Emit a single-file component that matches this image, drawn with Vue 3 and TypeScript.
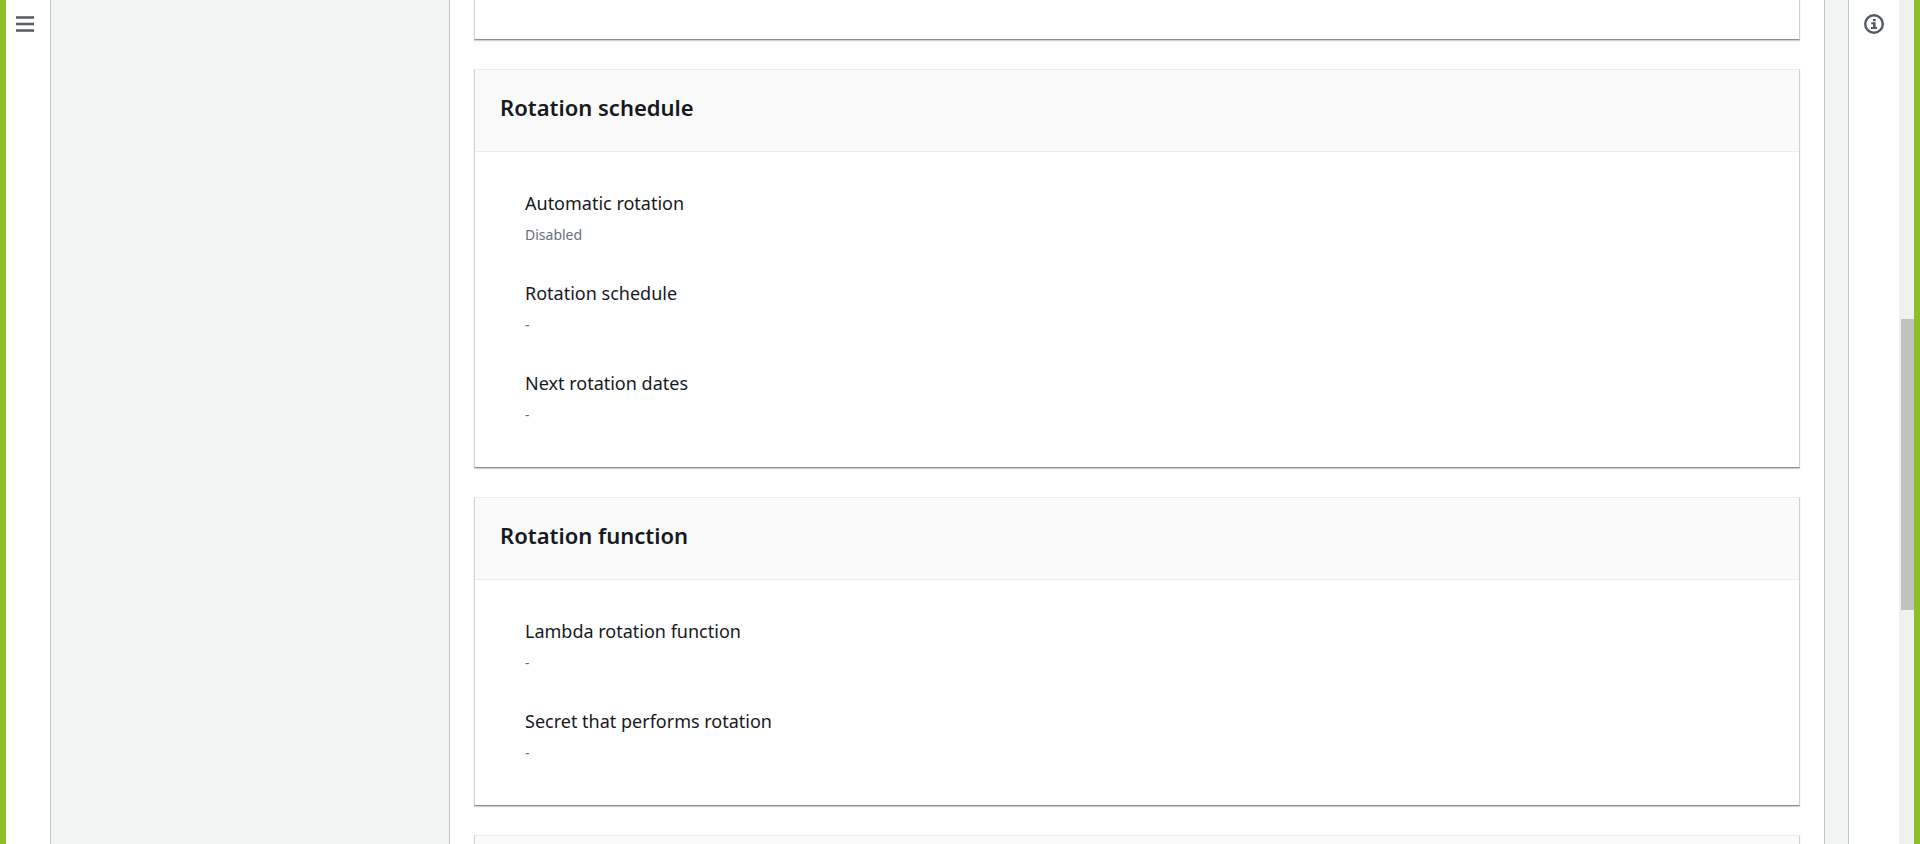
<script setup lang="ts">
interface Field {
  label: string
  value: string
}

interface Panel {
  id: string
  title: string
  fields: Field[]
}

const panels: Panel[] = [
  {
    id: 'schedule',
    title: 'Rotation schedule',
    fields: [
      { label: 'Automatic rotation', value: 'Disabled' },
      { label: 'Rotation schedule', value: '-' },
      { label: 'Next rotation dates', value: '-' },
    ],
  },
  {
    id: 'function',
    title: 'Rotation function',
    fields: [
      { label: 'Lambda rotation function', value: '-' },
      { label: 'Secret that performs rotation', value: '-' },
    ],
  },
]
</script>

<template>
  <div class="console">
    <nav class="rail rail-left" aria-label="Navigation">
      <button class="icon-button" type="button" aria-label="Open navigation">
        <svg width="18" height="18" viewBox="0 0 18 18" aria-hidden="true">
          <path d="M0 2.5h18M0 9h18M0 15.5h18" stroke="currentColor" stroke-width="2.4" />
        </svg>
      </button>
    </nav>

    <aside class="steps"></aside>

    <main class="content">
      <section class="card card-previous"></section>

      <section v-for="panel in panels" :key="panel.id" class="card" :aria-labelledby="panel.id">
        <header class="card-header">
          <h2 :id="panel.id">{{ panel.title }}</h2>
        </header>
        <dl class="fields">
          <div v-for="field in panel.fields" :key="field.label" class="field">
            <dt>{{ field.label }}</dt>
            <dd>{{ field.value }}</dd>
          </div>
        </dl>
      </section>

      <section class="card">
        <header class="card-header"></header>
      </section>
    </main>

    <div class="gutter"></div>

    <aside class="rail rail-right" aria-label="Help">
      <button class="icon-button" type="button" aria-label="Open help panel">
        <svg width="20" height="20" viewBox="0 0 20 20" aria-hidden="true">
          <circle cx="10" cy="10" r="8.8" fill="none" stroke="currentColor" stroke-width="2.4" />
          <path d="M9 5h2.6v2.2H9zM7.2 8.2h4.4v4.8h1.5v2H7v-2h2v-2.8H7.2z" fill="currentColor" />
        </svg>
      </button>
    </aside>

    <div class="scroll-track" aria-hidden="true">
      <div class="scroll-thumb"></div>
    </div>
  </div>
</template>

<style>
body {
  margin: 0;
}
</style>

<style scoped>
.console {
  display: flex;
  box-sizing: border-box;
  height: 100vh;
  overflow: hidden;
  border: solid #8dbf26;
  border-width: 0 6px;
  background: #fff;
  color: #16191f;
  font-family: "Noto Sans", "Open Sans", sans-serif;
}

.rail {
  flex: none;
  display: flex;
  justify-content: center;
  align-items: flex-start;
  box-sizing: border-box;
  padding-top: 14px;
  background: #fff;
}

.rail-left {
  width: 45px;
  padding-right: 6px;
  border-right: 1px solid #bfc8c8;
}

.rail-right {
  width: 51px;
  border-left: 1px solid #bfc8c8;
}

.icon-button {
  display: flex;
  align-items: center;
  height: 20px;
  padding: 0;
  border: 0;
  background: none;
  color: #545b64;
  cursor: pointer;
}

.steps {
  flex: none;
  width: 398px;
  background: #f2f4f4;
}

.content {
  flex: 1;
  display: flex;
  flex-direction: column;
  gap: 29px;
  min-width: 0;
  padding: 0 24px;
  border: solid #bfc8c8;
  border-width: 0 1px;
}

.gutter {
  flex: none;
  width: 23px;
  background: #f2f4f4;
}

.card {
  flex: none;
  border: 1px solid #ccd3d3;
  border-top-color: #eaeded;
  border-bottom-color: #879196;
  background: #fff;
  box-shadow: 0 1px 1px #ccd3d3;
}

.card-previous {
  height: 39px;
  border-top: 0;
}

.card-header {
  box-sizing: border-box;
  min-height: 82px;
  padding: 22px 25px;
  border-bottom: 1px solid #eaeded;
  background: #fafafa;
}

h2 {
  margin: 0;
  font-size: 22px;
  line-height: 30px;
  font-weight: 600;
}

.fields {
  display: flex;
  flex-direction: column;
  gap: 30px;
  margin: 0;
  padding: 35px 50px 40px;
}

.field {
  display: flex;
  flex-direction: column;
  gap: 4px;
}

dt {
  font-size: 18px;
  line-height: 32px;
}

dd {
  margin: 0;
  color: #687078;
  font-size: 14px;
  line-height: 24px;
}

.scroll-track {
  flex: none;
  box-sizing: border-box;
  width: 15px;
  padding: 319px 0 0 2px;
  background: #f0f0f0;
}

.scroll-thumb {
  height: 291px;
  background: #c1c1c1;
}
</style>
